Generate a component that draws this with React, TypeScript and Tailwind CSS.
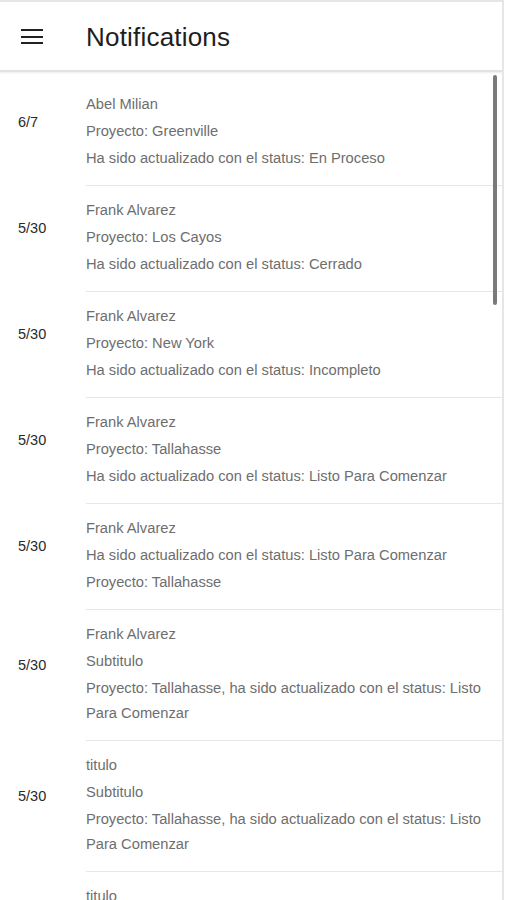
import React from 'react';

interface Note {
	date: string;
	lines: string[];
}

const notes: Note[] = [
	{ date: '6/7', lines: ['Abel Milian', 'Proyecto: Greenville', 'Ha sido actualizado con el status: En Proceso'] },
	{ date: '5/30', lines: ['Frank Alvarez', 'Proyecto: Los Cayos', 'Ha sido actualizado con el status: Cerrado'] },
	{ date: '5/30', lines: ['Frank Alvarez', 'Proyecto: New York', 'Ha sido actualizado con el status: Incompleto'] },
	{ date: '5/30', lines: ['Frank Alvarez', 'Proyecto: Tallahasse', 'Ha sido actualizado con el status: Listo Para Comenzar'] },
	{ date: '5/30', lines: ['Frank Alvarez', 'Ha sido actualizado con el status: Listo Para Comenzar', 'Proyecto: Tallahasse'] },
	{ date: '5/30', lines: ['Frank Alvarez', 'Subtitulo', 'Proyecto: Tallahasse, ha sido actualizado con el status: Listo Para Comenzar'] },
	{ date: '5/30', lines: ['titulo', 'Subtitulo', 'Proyecto: Tallahasse, ha sido actualizado con el status: Listo Para Comenzar'] },
	{ date: '5/30', lines: ['titulo', 'Subtitulo', 'Proyecto: Tallahasse, ha sido actualizado con el status: Listo Para Comenzar'] }
];

function NoteRow({ note }: { note: Note }) {
	return (
		<div className="flex items-center">
			<div className="w-[86px] shrink-0 pl-[18px] mb-5 text-[14.5px] text-[#2a2a2a]">{note.date}</div>
			<div className="flex-1 flex flex-col gap-[2px] pt-[12px] pb-[14px] pr-3 border-b border-[#e6e6e6]">
				{note.lines.map((line, i) => (
					<div key={i} className="text-[14.7px] leading-[25px] text-[#6e6e6e]">{line}</div>
				))}
			</div>
		</div>
	);
}

export default function App() {
	return (
		<div className="w-[504px] h-[900px] overflow-hidden bg-white border-t-2 border-r-2 border-[#e6e6e6] flex flex-col font-['Liberation_Sans',Arial,sans-serif]">
			<div className="h-[70px] shrink-0 flex items-center border-b-2 border-[#e2e2e2] shadow-[0_1px_2px_rgba(0,0,0,0.08)]">
				<div className="w-[86px] shrink-0 pl-[21px] pt-[1px] flex flex-col gap-[4.3px]">
					<div className="w-[22px] h-[2px] bg-[#222]" />
					<div className="w-[22px] h-[2px] bg-[#222]" />
					<div className="w-[22px] h-[2px] bg-[#222]" />
				</div>
				<h1 className="text-[26px] text-[#1e1e1e] pt-[3px] tracking-[0.2px]">Notifications</h1>
			</div>
			<div className="relative flex-1 pt-2">
				{notes.map((note, i) => (
					<NoteRow key={i} note={note} />
				))}
				<div className="absolute right-[5px] top-[3px] w-[4px] h-[230px] bg-[#7a7a7a] rounded-sm" />
			</div>
		</div>
	);
}
